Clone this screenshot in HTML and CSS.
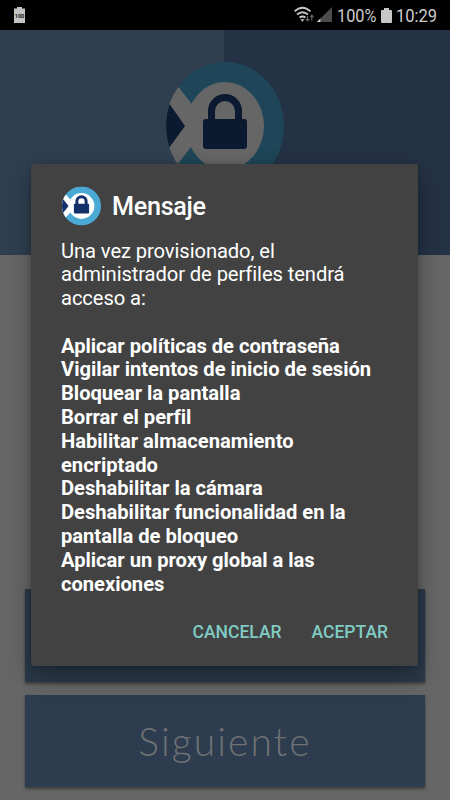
FILE: index.html
```html
<!DOCTYPE html>
<html lang="es">
<head>
<meta charset="utf-8">
<title>Mensaje</title>
<link rel="stylesheet" href="styles.css">
</head>
<body>
<div class="screen">
  <header class="status">
    <svg class="charge" viewBox="0 0 12 17"><path fill="#c4c4c4" d="M0 1.5h3V0h5v1.5h3V16H0z"/><text x="5.5" y="11" text-anchor="middle">100</text></svg>
    <div class="status-right">
      <svg class="wifi" viewBox="0 0 21 18" fill="none" stroke="#c8c8c8" stroke-width="1.9"><path d="M.6 5.4Q8.5-1.8 16.4 5.4M3 8.6q5.5-4.6 11 0M5.6 11.6q2.9-2.4 5.8 0"/><path d="M6.3 13.2h4.2l-2.1 2.6z" fill="#c8c8c8" stroke="none"/><path d="M13.5 10v5M11.8 12.8l1.7 2 1.7-2M17.8 14.5v-5M16.1 11.2l1.7-2 1.7 2" stroke="#666" stroke-width="1.2"/></svg>
      <svg class="signal" viewBox="0 0 15 16"><path d="M15 0v15H0z" fill="#4c4c4c"/><path d="M0 15l3.4-3.4V15z" fill="#ddd"/></svg>
      <span class="percent">100%</span>
      <svg class="battery" viewBox="0 0 11 16"><path fill="#c8c8c8" d="M1 2h2V0h5v2h2q1 0 1 1v11q0 1-1 1H1q-1 0-1-1V3q0-1 1-1z"/></svg>
      <span class="clock">10:29</span>
    </div>
  </header>
  <main class="page">
    <div class="hero">
      <svg class="logo" viewBox="0 0 118 128">
        <defs><clipPath id="disc"><ellipse cx="59" cy="64" rx="59" ry="64"/></clipPath></defs>
        <g clip-path="url(#disc)">
          <path fill="#1e4658" d="M0 0h118v128H0z"/>
          <path fill="#666" d="M0 9L25 41Q42 64 25 85L0 117z"/>
          <path fill="#0b1a30" d="M0 37L19 64 0 90z"/>
        </g>
        <ellipse cx="59" cy="64" rx="39" ry="44" fill="#666"/>
        <path fill="none" stroke="#0b1a30" stroke-width="7" d="M45.5 60V49a13.5 13.5 0 0 1 27 0v11"/>
        <rect x="37" y="57" width="44" height="30" rx="3" fill="#0b1a30"/>
      </svg>
    </div>
    <div class="actions">
      <div class="action covered"></div>
      <div class="action">Siguiente</div>
    </div>
  </main>
  <section class="dialog">
    <div class="heading">
      <svg class="badge" viewBox="0 0 118 118">
        <defs><clipPath id="round"><circle cx="59" cy="59" r="59"/></clipPath></defs>
        <g clip-path="url(#round)">
          <path fill="#4ba9d6" d="M0 0h118v118H0z"/>
          <path fill="#fff" d="M0 10L11 24 26 40Q40 59 26 78L11 94 0 108z"/>
          <path fill="#14306b" d="M0 34L20 59 0 84z"/>
        </g>
        <circle cx="59" cy="59" r="39" fill="#fff"/>
        <path fill="none" stroke="#14306b" stroke-width="9" d="M45 56V45a14 14 0 0 1 28 0v11"/>
        <rect x="36" y="52" width="46" height="30" rx="3" fill="#14306b"/>
      </svg>
      <h1 class="title">Mensaje</h1>
    </div>
    <div class="message">
      <p class="intro">Una vez provisionado, el<br>administrador de perfiles tendrá<br>acceso a:</p>
      <p class="permissions">Aplicar políticas de contraseña<br>Vigilar intentos de inicio de sesión<br>Bloquear la pantalla<br>Borrar el perfil<br>Habilitar almacenamiento<br>encriptado<br>Deshabilitar la cámara<br>Deshabilitar funcionalidad en la<br>pantalla de bloqueo<br>Aplicar un proxy global a las<br>conexiones</p>
    </div>
    <div class="buttons"><span>CANCELAR</span><span>ACEPTAR</span></div>
  </section>
</div>
</body>
</html>
```

FILE: styles.css
```css
* { box-sizing: border-box; }
body { margin: 0; font-family: Roboto, sans-serif; }
p, h1 { margin: 0; }
svg { display: block; flex: none; }
.screen { position: relative; width: 450px; height: 800px; overflow: hidden; background: #666; }
.status { display: flex; justify-content: space-between; height: 30px; padding: 0 13px 0 14px; background: #000; color: #cbcbcb; }
.charge { width: 12px; height: 17px; margin-top: 7px; }
.charge text { font: bold 5.5px Roboto, sans-serif; fill: #111; }
.status-right { display: flex; height: 30px; }
.wifi { width: 21px; height: 18px; margin: 6px 2px 0 0; }
.signal { width: 15px; height: 16px; margin: 7px 5px 0 0; }
.percent, .clock { font-size: 19px; line-height: 32px; white-space: nowrap; transform-origin: left; }
.percent { width: 39px; transform: scaleX(.86); margin-right: 5px; }
.battery { width: 11px; height: 16px; margin: 8px 4px 0 0; }
.clock { width: 41px; transform: scaleX(.87); }
.page { display: flex; flex-direction: column; height: 770px; }
.hero { display: flex; justify-content: center; height: 225px; padding-top: 32px; background: linear-gradient(90deg, #2f3f50 224px, #243245 224px); }
.logo { width: 118px; height: 128px; }
.actions { display: flex; flex-direction: column; gap: 13px; margin: 334px 25px 0; }
.action { height: 92.5px; background: #2d3d4f; box-shadow: 0 2px 3px rgba(0,0,0,.4); color: #6f7173; font: 300 39px/93px Lato, sans-serif; letter-spacing: 2.1px; text-align: center; }
.covered { background: #2a3949; }
.dialog { position: absolute; left: 31px; top: 164px; width: 387px; height: 502px; padding: 22px 30px 0; border-radius: 2px; background: #424242; box-shadow: 0 10px 26px rgba(0,0,0,.3), 0 1px 5px rgba(0,0,0,.2); color: #fff; }
.heading { display: flex; align-items: center; gap: 11px; height: 40px; }
.badge { width: 39px; height: 40px; margin-left: 1px; }
.title { font-size: 25.2px; font-weight: 500; letter-spacing: -.3px; line-height: 42px; padding-top: 2px; }
.message { margin-top: 13.5px; font-size: 20.2px; line-height: 23.8px; white-space: nowrap; }
.intro { letter-spacing: -.1px; }
.permissions { margin-top: 23.8px; font-weight: 700; letter-spacing: -.04px; }
.buttons { display: flex; justify-content: flex-end; gap: 30px; margin-top: 24.5px; font-size: 17.5px; font-weight: 500; line-height: 22px; color: #80cbc4; }
```
